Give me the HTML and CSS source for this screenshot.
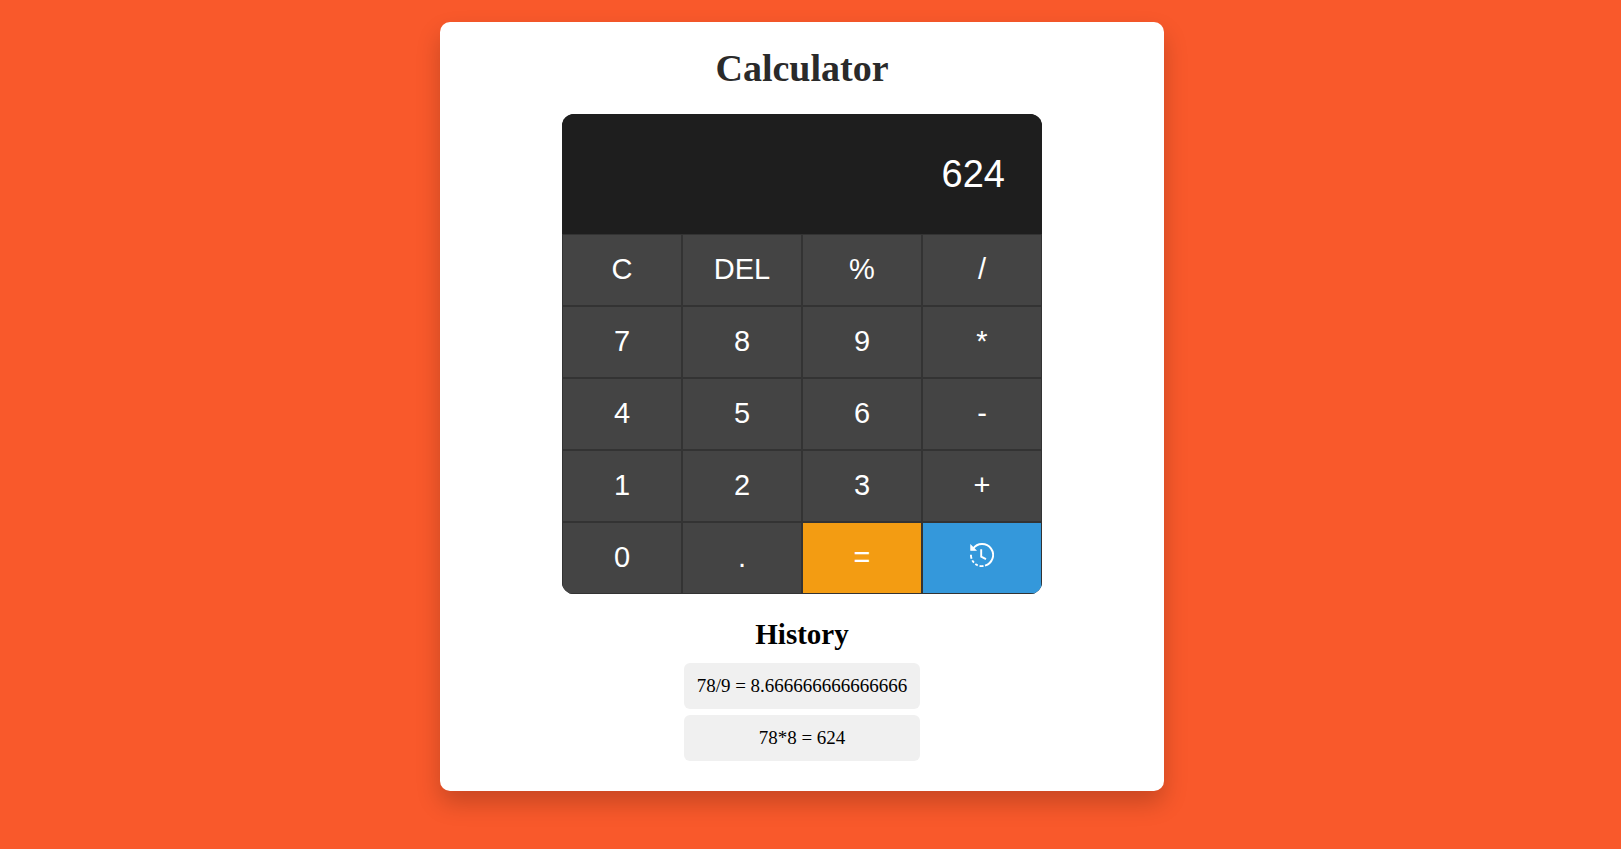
FILE: index.html
```html
<!DOCTYPE html>
<html lang="en">
<head>
<meta charset="utf-8">
<meta name="viewport" content="width=device-width, initial-scale=1">
<title>Calculator</title>
<link rel="stylesheet" href="styles.css">
</head>
<body>
<main class="card">
  <h1 class="title">Calculator</h1>
  <section class="calculator" aria-label="Calculator">
    <input class="display" type="text" value="624" aria-label="Result" readonly>
    <div class="keys">
      <button class="key" type="button">C</button>
      <button class="key" type="button">DEL</button>
      <button class="key" type="button">%</button>
      <button class="key" type="button">/</button>
      <button class="key" type="button">7</button>
      <button class="key" type="button">8</button>
      <button class="key" type="button">9</button>
      <button class="key" type="button">*</button>
      <button class="key" type="button">4</button>
      <button class="key" type="button">5</button>
      <button class="key" type="button">6</button>
      <button class="key" type="button">-</button>
      <button class="key" type="button">1</button>
      <button class="key" type="button">2</button>
      <button class="key" type="button">3</button>
      <button class="key" type="button">+</button>
      <button class="key" type="button">0</button>
      <button class="key" type="button">.</button>
      <button class="key key-equals" type="button">=</button>
      <button class="key key-history" type="button" aria-label="History">
        <svg class="icon" viewBox="0 0 24 24" fill="none" stroke="currentColor" stroke-width="1.9" aria-hidden="true">
          <path d="M3 5.800A11 11 0 1 1 15 22.600"/>
          <path d="M13.500 23A11 11 0 0 1 1 11" stroke-dasharray="4 1.800 2.800 1.800 2.800 1.800"/>
          <path d="M.9 2.500v4.700h4.700z" fill="currentColor" stroke-width="1.200"/>
          <path d="M11.200 6.200v7.500l4.800 2.500"/>
        </svg>
      </button>
    </div>
  </section>
  <section class="history">
    <h2 class="history-title">History</h2>
    <ul class="history-list">
      <li class="history-item">78/9 = 8.666666666666666</li>
      <li class="history-item">78*8 = 624</li>
    </ul>
  </section>
</main>
</body>
</html>
```

FILE: styles.css
```css
* {
  box-sizing: border-box;
}

body {
  margin: 0;
  min-height: 100vh;
  padding: 22px 17px 22px 0;
  background: #f9592b;
  font-family: "Liberation Serif", "Times New Roman", serif;
}

.card {
  display: flex;
  flex-direction: column;
  align-items: center;
  max-width: 724px;
  margin: 0 auto;
  padding: 24px 30px 30px;
  border-radius: 10px;
  background: #fff;
  box-shadow: 0 12px 24px rgba(0, 0, 0, 0.2);
}

.title {
  margin: 0 0 24px;
  color: #2a2a2a;
  font-size: 38px;
  line-height: 44px;
}

.calculator {
  width: 100%;
  max-width: 480px;
  overflow: hidden;
  border-radius: 12px;
  background: #1e1e1e;
}

.display {
  display: block;
  width: 100%;
  height: 120px;
  padding: 0 37px;
  border: 0;
  outline: 0;
  background: #1e1e1e;
  color: #fff;
  font: 38px "Liberation Sans", Arial, sans-serif;
  text-align: right;
}

.keys {
  display: grid;
  grid-template-columns: repeat(4, 1fr);
  grid-auto-rows: 72px;
}

.key {
  display: flex;
  align-items: center;
  justify-content: center;
  padding: 0 0 2px;
  border: 1px solid #333;
  background: #444;
  color: #fff;
  font: 29px "Liberation Sans", Arial, sans-serif;
  cursor: pointer;
}

.key-equals {
  background: #f39c12;
}

.key-history {
  padding-bottom: 6px;
  background: #3498db;
}

.icon {
  width: 24px;
  height: 24px;
}

.history {
  min-width: 236px;
  margin-top: 24px;
}

.history-title {
  margin: 0 0 12px;
  font-size: 29px;
  line-height: 33px;
  text-align: center;
}

.history-list {
  display: grid;
  gap: 6px;
  margin: 0;
  padding: 0;
  list-style: none;
}

.history-item {
  padding: 12px;
  border-radius: 6px;
  background: #f0f0f0;
  font-size: 19px;
  line-height: 22px;
  text-align: center;
}
```
